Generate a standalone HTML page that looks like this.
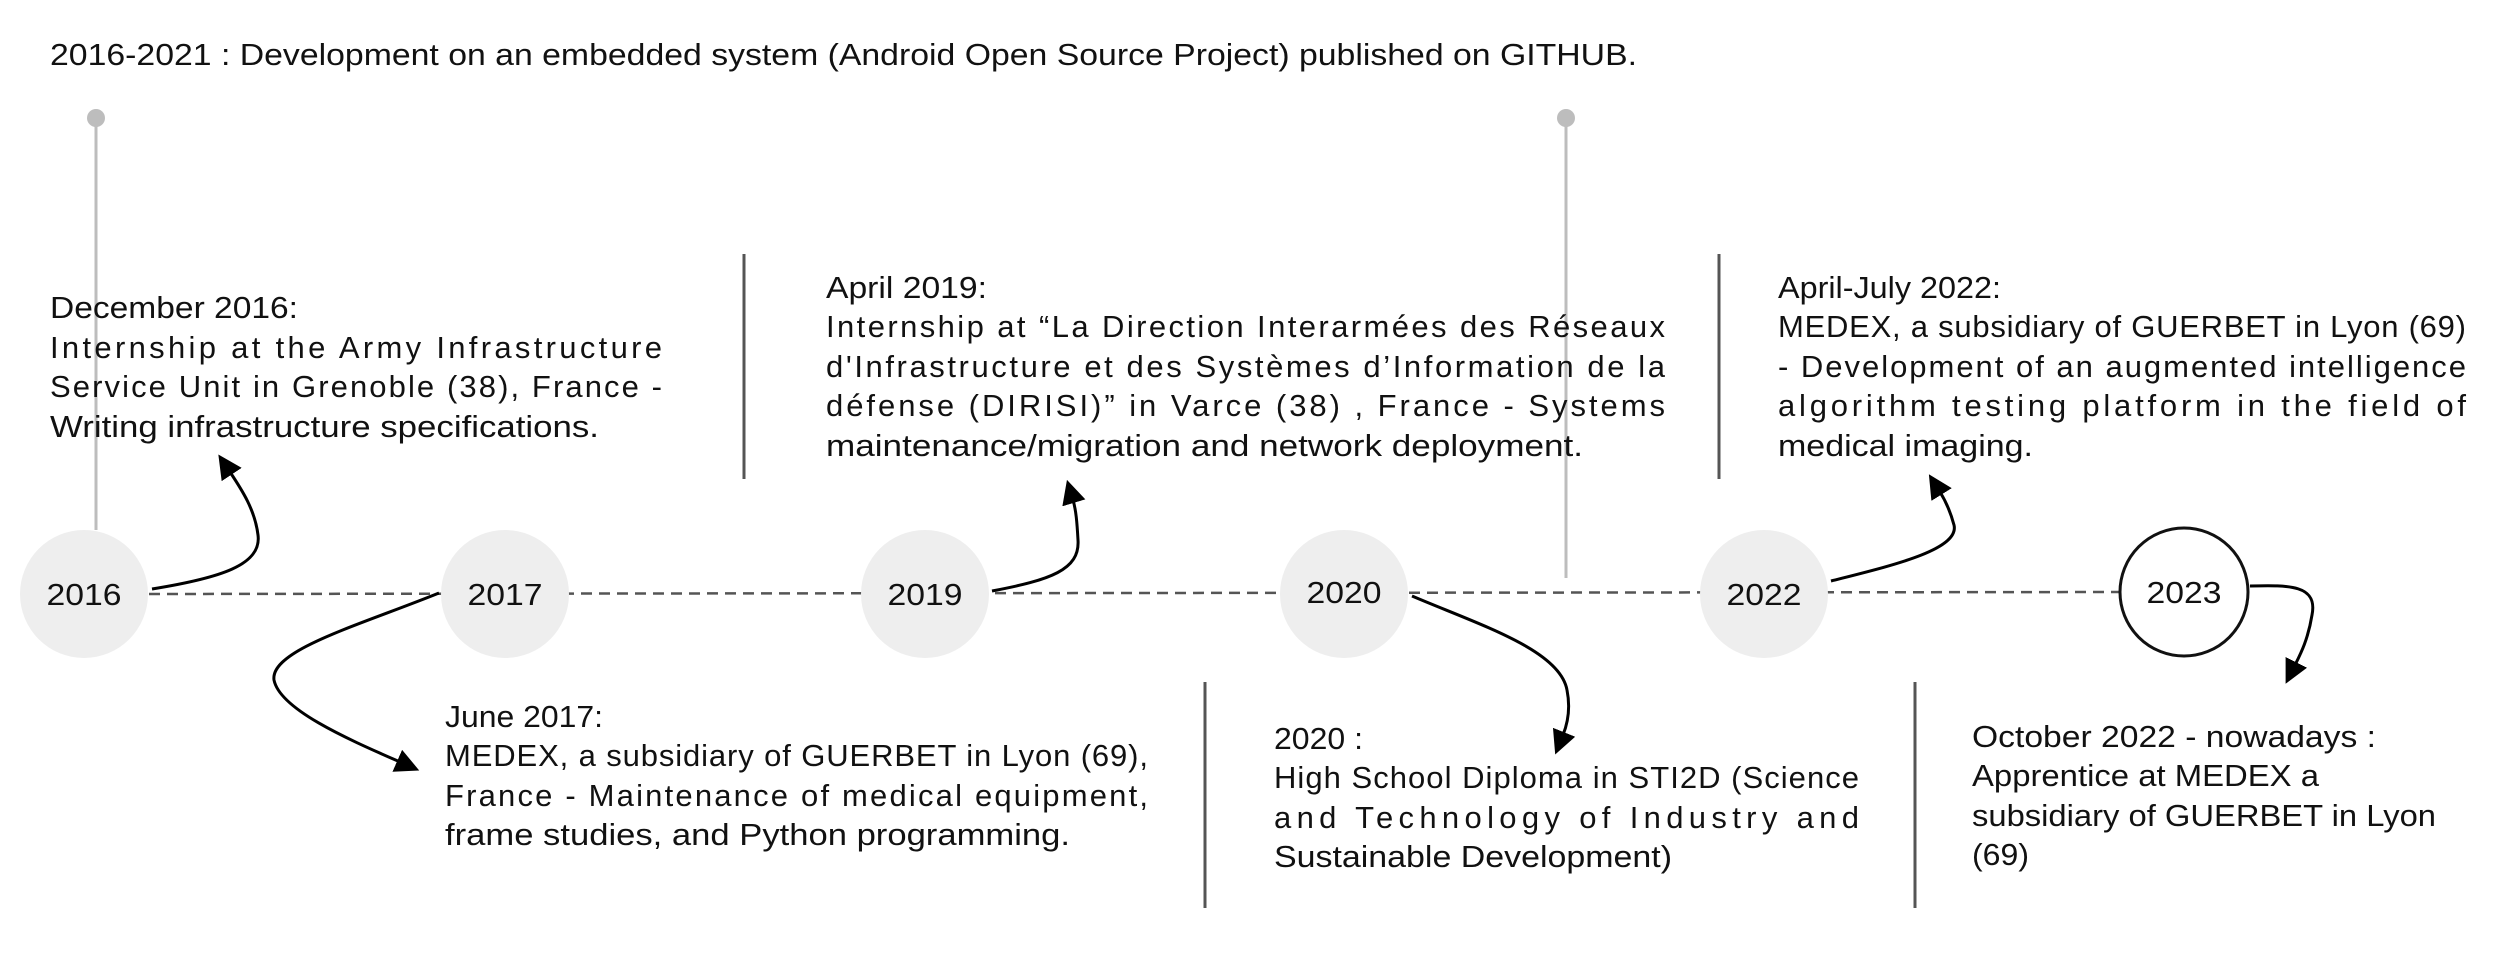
<!DOCTYPE html>
<html><head><meta charset="utf-8"><style>
html,body{margin:0;padding:0;background:#fff;}
svg{display:block;}
text{font-family:"Liberation Sans",sans-serif;font-size:31px;fill:#111;}
</style></head><body>
<svg width="2512" height="964" viewBox="0 0 2512 964" xmlns="http://www.w3.org/2000/svg">
<defs>
<marker id="ah" markerWidth="8" markerHeight="8" refX="1" refY="4" orient="auto" markerUnits="strokeWidth">
<path d="M0,0 L8,4 L0,8 z" fill="#000"/>
</marker>
</defs>
<text x="50" y="65" textLength="1587" lengthAdjust="spacingAndGlyphs">2016-2021 : Development on an embedded system (Android Open Source Project) published on GITHUB.</text>

<line x1="96" y1="118" x2="96" y2="530" stroke="#bdbdbd" stroke-width="3"/>
<circle cx="96" cy="118" r="9" fill="#bdbdbd"/>
<line x1="1566" y1="118" x2="1566" y2="578" stroke="#bdbdbd" stroke-width="3"/>
<circle cx="1566" cy="118" r="9" fill="#bdbdbd"/>

<line x1="149" y1="594" x2="2120" y2="592" stroke="#555" stroke-width="2.5" stroke-dasharray="11,7"/>

<line x1="744" y1="254" x2="744" y2="479" stroke="#555" stroke-width="3"/>
<line x1="1719" y1="254" x2="1719" y2="479" stroke="#555" stroke-width="3"/>
<line x1="1205" y1="682" x2="1205" y2="908" stroke="#555" stroke-width="3"/>
<line x1="1915" y1="682" x2="1915" y2="908" stroke="#555" stroke-width="3"/>

<circle cx="84" cy="594" r="64" fill="#eeeeee"/>
<circle cx="505" cy="594" r="64" fill="#eeeeee"/>
<circle cx="925" cy="594" r="64" fill="#eeeeee"/>
<circle cx="1344" cy="594" r="64" fill="#eeeeee"/>
<circle cx="1764" cy="594" r="64" fill="#eeeeee"/>
<circle cx="2184" cy="592" r="64" fill="#fff" stroke="#111" stroke-width="3"/>
<text x="84" y="605" text-anchor="middle" textLength="75" lengthAdjust="spacingAndGlyphs">2016</text>
<text x="505" y="605" text-anchor="middle" textLength="75" lengthAdjust="spacingAndGlyphs">2017</text>
<text x="925" y="605" text-anchor="middle" textLength="75" lengthAdjust="spacingAndGlyphs">2019</text>
<text x="1344" y="603" text-anchor="middle" textLength="75" lengthAdjust="spacingAndGlyphs">2020</text>
<text x="1764" y="605" text-anchor="middle" textLength="75" lengthAdjust="spacingAndGlyphs">2022</text>
<text x="2184" y="603" text-anchor="middle" textLength="75" lengthAdjust="spacingAndGlyphs">2023</text>

<g fill="none" stroke="#000" stroke-width="3" marker-end="url(#ah)">
<path d="M152,589 C220,578 262,565 258,535 C255,510 242,490 230,472"/>
<path d="M439,593 C360,625 270,650 274,680 C280,710 350,740 400,762"/>
<path d="M992,591 C1050,580 1080,570 1078,540 C1077,522 1076,510 1073,500"/>
<path d="M1412,596 C1480,625 1560,650 1567,690 C1571,710 1567,725 1563,735"/>
<path d="M1831,581 C1890,566 1960,550 1954,525 C1950,510 1945,500 1940,492"/>
<path d="M2250,586 C2290,585 2318,585 2312,615 C2308,640 2300,655 2295,665"/>
</g>

<text x="50" y="318" textLength="248" lengthAdjust="spacingAndGlyphs">December 2016:</text>
<text x="50" y="358" textLength="612" lengthAdjust="spacing">Internship at the Army Infrastructure</text>
<text x="50" y="397" textLength="612" lengthAdjust="spacing">Service Unit in Grenoble (38), France -</text>
<text x="50" y="437" textLength="549" lengthAdjust="spacingAndGlyphs">Writing infrastructure specifications.</text>

<text x="826" y="298" textLength="161" lengthAdjust="spacingAndGlyphs">April 2019:</text>
<text x="826" y="337" textLength="839" lengthAdjust="spacing">Internship at “La Direction Interarmées des Réseaux</text>
<text x="826" y="377" textLength="839" lengthAdjust="spacing">d'Infrastructure et des Systèmes d’Information de la</text>
<text x="826" y="416" textLength="839" lengthAdjust="spacing">défense (DIRISI)” in Varce (38) , France - Systems</text>
<text x="826" y="456" textLength="757" lengthAdjust="spacingAndGlyphs">maintenance/migration and network deployment.</text>

<text x="1778" y="298" textLength="223" lengthAdjust="spacingAndGlyphs">April-July 2022:</text>
<text x="1778" y="337" textLength="688" lengthAdjust="spacing">MEDEX, a subsidiary of GUERBET in Lyon (69)</text>
<text x="1778" y="377" textLength="688" lengthAdjust="spacing">- Development of an augmented intelligence</text>
<text x="1778" y="416" textLength="688" lengthAdjust="spacing">algorithm testing platform in the field of</text>
<text x="1778" y="456" textLength="255" lengthAdjust="spacingAndGlyphs">medical imaging.</text>

<text x="445" y="727" textLength="158" lengthAdjust="spacingAndGlyphs">June 2017:</text>
<text x="445" y="766" textLength="703" lengthAdjust="spacing">MEDEX, a subsidiary of GUERBET in Lyon (69),</text>
<text x="445" y="806" textLength="703" lengthAdjust="spacing">France - Maintenance of medical equipment,</text>
<text x="445" y="845" textLength="625" lengthAdjust="spacingAndGlyphs">frame studies, and Python programming.</text>

<text x="1274" y="749" textLength="89" lengthAdjust="spacingAndGlyphs">2020 :</text>
<text x="1274" y="788" textLength="585" lengthAdjust="spacing">High School Diploma in STI2D (Science</text>
<text x="1274" y="828" textLength="585" lengthAdjust="spacing">and Technology of Industry and</text>
<text x="1274" y="867" textLength="398" lengthAdjust="spacingAndGlyphs">Sustainable Development)</text>

<text x="1972" y="747" textLength="404" lengthAdjust="spacingAndGlyphs">October 2022 - nowadays :</text>
<text x="1972" y="786" textLength="347" lengthAdjust="spacingAndGlyphs">Apprentice at MEDEX a</text>
<text x="1972" y="826" textLength="464" lengthAdjust="spacingAndGlyphs">subsidiary of GUERBET in Lyon</text>
<text x="1972" y="865" textLength="57" lengthAdjust="spacingAndGlyphs">(69)</text>
</svg>
</body></html>
